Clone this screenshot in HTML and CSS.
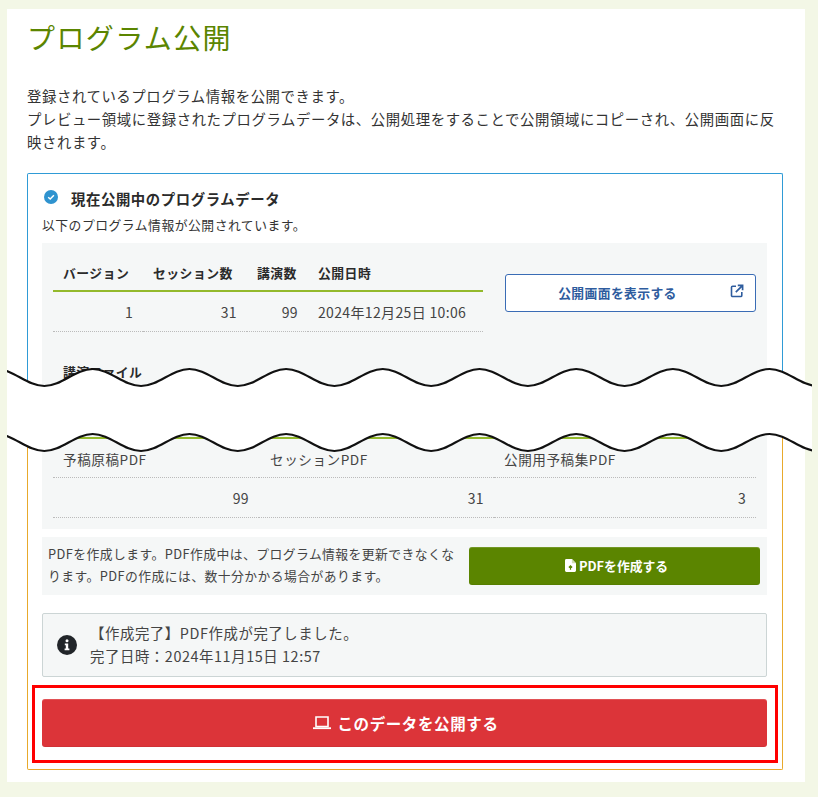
FILE: index.html
```html
<!DOCTYPE html>
<html lang="ja">
<head>
<meta charset="utf-8">
<title>プログラム公開</title>
<link rel="stylesheet" href="styles.css">
</head>
<body>
<main class="page">
  <h1 class="title">プログラム公開</h1>
  <p class="lead">登録されているプログラム情報を公開できます。<br>プレビュー領域に登録されたプログラムデータは、公開処理をすることで公開領域にコピーされ、公開画面に反映されます。</p>

  <section class="card-upper">
    <h2 class="card-title">
      <svg class="check-icon" viewBox="0 0 14 14" width="14" height="14"><circle cx="7" cy="7" r="7" fill="#2f93cf"/><path d="M4.2 7.2 6.2 9 9.9 5.3" fill="none" stroke="#fff" stroke-width="1.5"/></svg>
      <span>現在公開中のプログラムデータ</span>
    </h2>
    <p class="card-sub">以下のプログラム情報が公開されています。</p>
    <div class="panel panel-upper">
      <div class="version-row">
        <table class="data version-table">
          <thead>
            <tr><th class="c1">バージョン</th><th class="c2">セッション数</th><th class="c3">講演数</th><th class="c4">公開日時</th></tr>
          </thead>
          <tbody>
            <tr><td class="num">1</td><td class="num">31</td><td class="num">99</td><td>2024年12月25日 10:06</td></tr>
          </tbody>
        </table>
        <a class="btn-outline">
          <span>公開画面を表示する</span>
          <svg class="ext-icon" viewBox="0 0 14 14" width="14" height="14"><path d="M6 2.2H2.6A1.1 1.1 0 0 0 1.5 3.3v8.1a1.1 1.1 0 0 0 1.1 1.1h8.1a1.1 1.1 0 0 0 1.1-1.1V8" fill="none" stroke="#2e5c9e" stroke-width="1.6"/><path d="M5.8 8.2 11.6 2.4M7.8 1.4h4.8v4.8" fill="none" stroke="#2e5c9e" stroke-width="1.7"/></svg>
        </a>
      </div>
      <h3 class="section-head">講演ファイル</h3>
    </div>
  </section>

  <section class="card-lower">
    <div class="panel panel-lower">
      <table class="data file-table">
        <tbody>
          <tr class="label-row"><td class="f1">予稿原稿PDF</td><td class="f2">セッションPDF</td><td class="f3">公開用予稿集PDF</td></tr>
          <tr><td class="num">99</td><td class="num">31</td><td class="num">3</td></tr>
        </tbody>
      </table>
    </div>

    <div class="panel pdf-row">
      <p class="pdf-text">PDFを作成します。PDF作成中は、プログラム情報を更新できなくなります。PDFの作成には、数十分かかる場合があります。</p>
      <a class="btn-green">
        <svg viewBox="0 0 12 14" width="11" height="13"><path d="M1.5 0H7.5L12 4.5V12.5A1.5 1.5 0 0 1 10.5 14H1.5A1.5 1.5 0 0 1 0 12.5V1.5A1.5 1.5 0 0 1 1.5 0Z" fill="#fff"/><path d="M7.5 0V4.5H12Z" fill="#cfdcb0"/><path d="M6 11.5V7.5M4.2 9.2 6 7.4 7.8 9.2" fill="none" stroke="#5b8500" stroke-width="1.3"/></svg>
        <span>PDFを作成する</span>
      </a>
    </div>

    <div class="alert">
      <svg class="info-icon" viewBox="0 0 20 20" width="20" height="20"><circle cx="10" cy="10" r="10" fill="#212529"/><circle cx="10" cy="5.8" r="1.5" fill="#fff"/><path d="M7.8 8.6h3.4v5h1.2v1.6H7.6v-1.6h1.2V10.2h-1Z" fill="#fff"/></svg>
      <p class="alert-text">【作成完了】PDF作成が完了しました。<br>完了日時：2024年11月15日 12:57</p>
    </div>

    <div class="highlight">
      <a class="btn-red">
        <svg viewBox="0 0 18 14" width="18" height="14"><path d="M3 1h12v9.5H3Z" fill="none" stroke="#fff" stroke-width="1.6"/><path d="M0 12.2h18" stroke="#fff" stroke-width="1.8"/></svg>
        <span>このデータを公開する</span>
      </a>
    </div>
  </section>

  <svg class="tear" viewBox="0 0 805 90" width="805" height="90" aria-hidden="true">
    <defs>
      <path id="wave" d="M-11 3c17.6 0 30.75 17 48.35 17s30.75-17 48.35-17s30.75 17 48.35 17s30.75-17 48.35-17s30.75 17 48.35 17s30.75-17 48.35-17s30.75 17 48.35 17s30.75-17 48.35-17s30.75 17 48.35 17s30.75-17 48.35-17s30.75 17 48.35 17s30.75-17 48.35-17s30.75 17 48.35 17s30.75-17 48.35-17s30.75 17 48.35 17s30.75-17 48.35-17s30.75 17 48.35 17s30.75-17 48.35-17"/>
    </defs>
    <path class="tear-fill" d="M-11 3c17.6 0 30.75 17 48.35 17s30.75-17 48.35-17s30.75 17 48.35 17s30.75-17 48.35-17s30.75 17 48.35 17s30.75-17 48.35-17s30.75 17 48.35 17s30.75-17 48.35-17s30.75 17 48.35 17s30.75-17 48.35-17s30.75 17 48.35 17s30.75-17 48.35-17s30.75 17 48.35 17s30.75-17 48.35-17s30.75 17 48.35 17s30.75-17 48.35-17s30.75 17 48.35 17s30.75-17 48.35-17V20H-11Z"/>
    <rect class="tear-fill" x="0" y="19" width="805" height="50"/>
    <use href="#wave" class="tear-fill" y="65"/>
    <use href="#wave" class="tear-line"/>
    <use href="#wave" class="tear-line" y="65"/>
  </svg>
</main>
</body>
</html>
```

FILE: styles.css
```css
* { box-sizing: border-box; }
html, body { margin: 0; padding: 0; }
body {
  background: #f3f7e6;
  color: #333;
  font-family: "Noto Sans CJK JP", "Noto Sans", sans-serif;
  font-size: 14px;
  height: 797px;
  overflow: hidden;
  text-spacing-trim: space-all;
}
.page {
  position: relative;
  width: 798px;
  margin: 9px 0 0 7px;
  padding: 0 22px 12px 20px;
  background: #fff;
}
.title {
  margin: 0;
  padding-top: 6px;
  height: 75px;
  font-size: 28px;
  line-height: 44px;
  font-weight: 400;
  letter-spacing: .05em;
  color: #5b8500;
}
.lead {
  margin: 0 0 20px;
  font-size: 14.4px;
  line-height: 23px;
  letter-spacing: .04em;
  height: 69px;
}
.card-upper, .card-lower { padding-right: 15px; padding-left: 14px; }
.card-upper {
  border: 1px solid #2f9bd6;
  border-bottom: 0;
  border-radius: 2px 2px 0 0;
  padding-top: 14px;
  height: 237px;
}
.card-lower {
  border: 1px solid #e8a92c;
  border-top: 0;
  border-radius: 0 0 2px 2px;
  padding-bottom: 6px;
}
.card-title {
  margin: 0;
  display: flex;
  align-items: flex-start;
  gap: 13px;
  padding-left: 2px;
  font-size: 14.4px;
  line-height: 22px;
  font-weight: 700;
  letter-spacing: .04em;
  color: #2b2b2b;
}
.check-icon { margin-top: 2px; flex: none; }
.card-sub {
  margin: 6px 0 9px;
  font-size: 12.8px;
  line-height: 18px;
  letter-spacing: .04em;
}
.panel { background: #f5f7f7; }
.panel-upper { padding: 11px 11px 0; height: 167px; }
.version-row { display: flex; align-items: center; justify-content: space-between; }
.data { border-collapse: collapse; table-layout: fixed; font-size: 14px; }
.data th {
  height: 37px;
  padding: 0 10px;
  text-align: left;
  font-size: 12.8px;
  font-weight: 700;
  letter-spacing: .04em;
  color: #2b2b2b;
  border-bottom: 2px solid #93b92c;
}
.data td {
  height: 40px;
  padding: 2px 10px 0;
  border-bottom: 1px dotted #bbb;
  letter-spacing: .025em;
  color: #444;
}
.data .num { text-align: right; }
.version-table { width: 430px; }
.c1 { width: 90px; }
.c2 { width: 104px; }
.c3 { width: 61px; }
.btn-outline {
  position: relative;
  width: 251px;
  height: 38px;
  display: flex;
  align-items: center;
  justify-content: center;
  padding-right: 26px;
  background: #fff;
  border: 1px solid #3a6cb5;
  border-radius: 3px;
  color: #2e5c9e;
  font-size: 12.8px;
  font-weight: 700;
  letter-spacing: .03em;
}
.ext-icon { position: absolute; right: 11px; top: 9px; }
.section-head {
  margin: 30px 0 0;
  padding-left: 10px;
  font-size: 12.8px;
  line-height: 20px;
  font-weight: 700;
  letter-spacing: .03em;
  color: #2b2b2b;
}
.panel-lower { padding: 27px 11px 11px; margin-bottom: 8px; }
.file-table { width: 703px; border-top: 2px solid #93b92c; }
.f1 { width: 206px; }
.f2 { width: 235px; }
.data .label-row td { height: 39px; padding-top: 3px; font-size: 13.6px; letter-spacing: .04em; }
.data .label-row .f2 { padding-left: 11px; }
.pdf-row {
  display: flex;
  align-items: center;
  justify-content: space-between;
  height: 58px;
  padding: 0 7px 0 6px;
  margin-bottom: 18px;
}
.pdf-text {
  margin: 0 0 2px;
  width: 416px;
  font-size: 12.8px;
  line-height: 22px;
  letter-spacing: .035em;
  color: #444;
}
.btn-green {
  width: 291px;
  height: 38px;
  display: flex;
  align-items: center;
  justify-content: center;
  gap: 3px;
  padding-left: 4px;
  background: #5b8500;
  box-shadow: inset 0 1px rgba(255,255,255,.15), inset 0 -1px rgba(0,0,0,.05);
  border-radius: 3px;
  color: #fff;
  font-size: 12.8px;
  font-weight: 700;
}
.alert {
  display: flex;
  align-items: center;
  gap: 13px;
  height: 64px;
  padding-left: 14px;
  background: #f5f7f7;
  border: 1px solid #ccd5d5;
  border-radius: 2px;
  margin-bottom: 8px;
}
.info-icon { flex: none; }
.alert-text {
  margin: 0 0 1px;
  font-size: 14.4px;
  line-height: 23px;
  letter-spacing: .04em;
  color: #444;
}
.highlight {
  margin: 0 -11px 0 -10px;
  padding: 11px 8px 13px 7px;
  border: 3px solid #f00;
}
.btn-red {
  height: 48px;
  display: flex;
  align-items: center;
  justify-content: center;
  gap: 6px;
  padding-left: 3px;
  background: #dc3439;
  box-shadow: inset 0 1px rgba(255,255,255,.15), inset 0 -1px rgba(0,0,0,.05);
  border-radius: 3px;
  color: #fff;
  font-size: 15.5px;
  font-weight: 700;
  letter-spacing: .04em;
}
.tear {
  position: absolute;
  left: 0;
  top: 357px;
  overflow: hidden;
}
.tear-fill { fill: #fff; }
.tear-line { fill: none; stroke: #111; stroke-width: 2.2; }
```
